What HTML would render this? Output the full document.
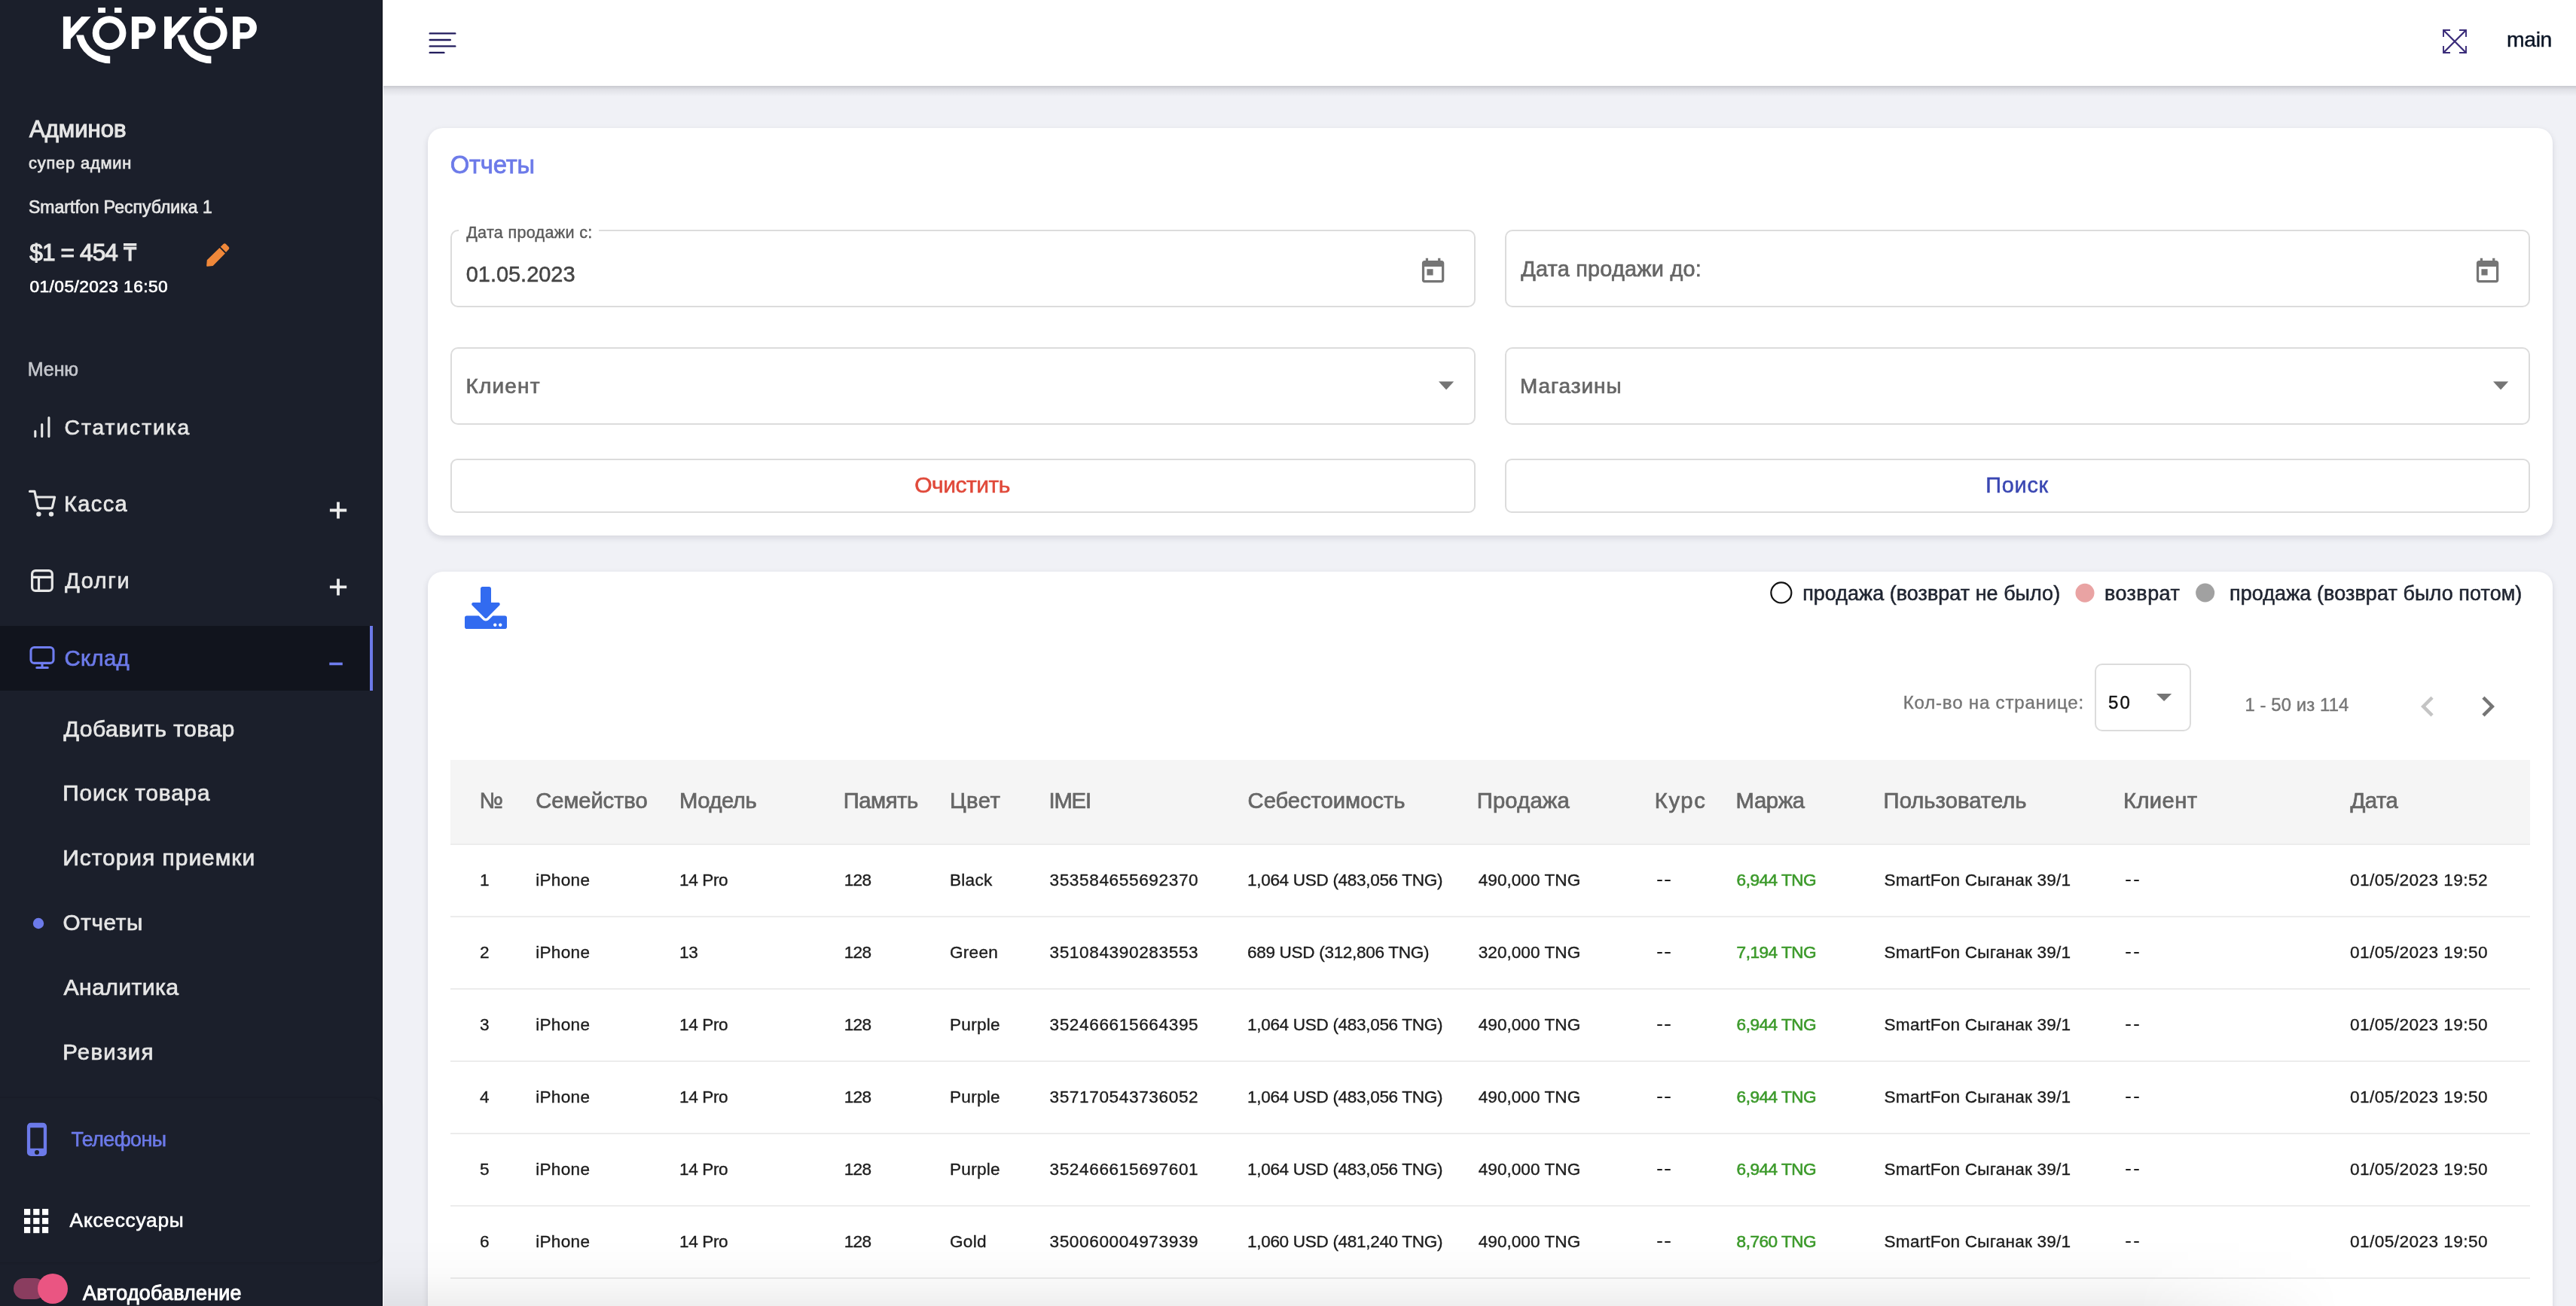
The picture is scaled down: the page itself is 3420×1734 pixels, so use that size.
<!DOCTYPE html>
<html><head><meta charset="utf-8"><title>Отчеты</title>
<style>
html,body{margin:0;padding:0}
body{width:3420px;height:1734px;overflow:hidden;position:relative;background:#f0f1f6;font-family:"Liberation Sans",sans-serif}
.t{position:absolute;line-height:1;white-space:nowrap}
.a{position:absolute}
svg{position:absolute;overflow:visible}
</style></head><body>

<div class="a" style="left:508px;top:0;width:2912px;height:114px;background:#fff"></div>
<div class="a" style="left:508px;top:114px;width:2912px;height:14px;background:linear-gradient(to bottom,rgba(40,40,50,0.2),rgba(40,40,50,0.08) 35%,rgba(40,40,50,0))"></div>
<div class="a" style="left:568px;top:170px;width:2821px;height:541px;background:#fff;border-radius:20px;box-shadow:0 3px 8px rgba(20,20,40,0.12)"></div>
<div class="a" style="left:568px;top:759px;width:2821px;height:1100px;background:#fff;border-radius:20px;box-shadow:0 3px 8px rgba(20,20,40,0.12)"></div>
<div class="a" style="left:597.7px;top:304.8px;width:1357.0px;height:99.6px;border:2px solid #dcdcdc;border-radius:10px"></div>
<div class="a" style="left:1997.7px;top:304.8px;width:1357.0px;height:99.6px;border:2px solid #dcdcdc;border-radius:10px"></div>
<div class="a" style="left:597.7px;top:460.6px;width:1357.0px;height:99.2px;border:2px solid #dcdcdc;border-radius:10px"></div>
<div class="a" style="left:1997.7px;top:460.6px;width:1357.0px;height:99.2px;border:2px solid #dcdcdc;border-radius:10px"></div>
<div class="a" style="left:597.7px;top:608.7px;width:1357.0px;height:68.3px;border:2px solid #dcdcdc;border-radius:9px"></div>
<div class="a" style="left:1997.7px;top:608.7px;width:1357.0px;height:68.3px;border:2px solid #dcdcdc;border-radius:9px"></div>
<div class="a" style="left:609px;top:300px;width:186px;height:12px;background:#fff"></div>
<div class="a" style="left:2780.6px;top:881.4px;width:124.1px;height:85.6px;border:2px solid #dcdcdc;border-radius:10px"></div>
<div class="a" style="left:598px;top:1009px;width:2761px;height:112px;background:#f5f5f5"></div>
<div class="a" style="left:598px;top:1120px;width:2761px;height:2px;background:#ececec"></div>
<div class="a" style="left:598px;top:1216px;width:2761px;height:2px;background:#ececec"></div>
<div class="a" style="left:598px;top:1312px;width:2761px;height:2px;background:#ececec"></div>
<div class="a" style="left:598px;top:1408px;width:2761px;height:2px;background:#ececec"></div>
<div class="a" style="left:598px;top:1504px;width:2761px;height:2px;background:#ececec"></div>
<div class="a" style="left:598px;top:1600px;width:2761px;height:2px;background:#ececec"></div>
<div class="a" style="left:598px;top:1696px;width:2761px;height:2px;background:#ececec"></div>
<div class="a" style="left:508px;top:1645px;width:2912px;height:89px;background:linear-gradient(to bottom,rgba(0,0,0,0),rgba(0,0,0,0.015) 50%,rgba(0,0,0,0.062));-webkit-mask-image:linear-gradient(to right,#000 2330px,rgba(0,0,0,0) 2600px);mask-image:linear-gradient(to right,#000 2330px,rgba(0,0,0,0) 2600px)"></div>
<svg style="left:1882.8px;top:340.6px" width="39.2" height="39.2" viewBox="0 0 24 24"><path fill="#757575" d="M19 3h-1V1h-2v2H8V1H6v2H5c-1.11 0-1.99.9-1.99 2L3 19c0 1.1.89 2 2 2h14c1.1 0 2-.9 2-2V5c0-1.1-.9-2-2-2zm0 16H5V8h14v11zM7 10h5v5H7z"/></svg>
<svg style="left:3283.0px;top:340.6px" width="39.2" height="39.2" viewBox="0 0 24 24"><path fill="#757575" d="M19 3h-1V1h-2v2H8V1H6v2H5c-1.11 0-1.99.9-1.99 2L3 19c0 1.1.89 2 2 2h14c1.1 0 2-.9 2-2V5c0-1.1-.9-2-2-2zm0 16H5V8h14v11zM7 10h5v5H7z"/></svg>
<svg style="left:0;top:0" width="1" height="1"><path fill="#757575" d="M1910 506.6h20.2l-10.1 10.9z"/></svg>
<svg style="left:0;top:0" width="1" height="1"><path fill="#757575" d="M3310 506.6h20.2l-10.1 10.9z"/></svg>
<svg style="left:0;top:0" width="1" height="1"><path fill="#757575" d="M2863 920.9h20.2l-10.1 10z"/></svg>
<svg style="left:3196px;top:910.8px" width="54" height="54" viewBox="0 0 24 24"><path fill="#c4c4c4" d="M15.41 7.41L14 6l-6 6 6 6 1.41-1.41L10.83 12z"/></svg>
<svg style="left:3276.1px;top:910.8px" width="54" height="54" viewBox="0 0 24 24"><path fill="#757575" d="M10 6L8.59 7.41 13.17 12l-4.58 4.59L10 18l6-6z"/></svg>
<svg style="left:617.4px;top:779px" width="56" height="56" viewBox="0 0 512 512"><path fill="#326bf0" d="M216 0h80c13.3 0 24 10.7 24 24v168h87.7c17.8 0 26.7 21.5 14.1 34.1L269.7 378.3c-7.5 7.5-19.8 7.5-27.3 0L90.1 226.1c-12.6-12.6-3.7-34.1 14.1-34.1H192V24c0-13.3 10.7-24 24-24zm296 376v112c0 13.3-10.7 24-24 24H24c-13.3 0-24-10.7-24-24V376c0-13.3 10.7-24 24-24h146.7l49 49c20.1 20.1 52.5 20.1 72.6 0l49-49H488c13.3 0 24 10.7 24 24zm-124 88c0-11-9-20-20-20s-20 9-20 20 9 20 20 20 20-9 20-20zm64 0c0-11-9-20-20-20s-20 9-20 20 9 20 20 20 20-9 20-20z"/></svg>
<svg style="left:0;top:0" width="1" height="1"><circle cx="2364.85" cy="786.95" r="13.5" fill="none" stroke="#111" stroke-width="2.2"/><circle cx="2768" cy="787.25" r="12.5" fill="#e9a3a3"/><circle cx="2927.65" cy="787" r="12.5" fill="#a1a1a1"/></svg>
<svg style="left:0;top:0" width="1" height="1"><g stroke="#211b5c" stroke-width="2.4" stroke-linecap="round"><path d="M570.7 44.4H604.3M570.7 53H597.8M570.7 61.4H604.3M570.7 69.9H589.4"/></g></svg>
<svg style="left:0;top:0" width="1" height="1"><g fill="none" stroke="#3b2d7a" stroke-width="2"><path d="M3244 49V40H3253M3265 40H3274V49M3274 61V70H3265M3253 70H3244V61" stroke-width="1.9"/><path d="M3244.5 40.5L3273.5 69.5M3273.5 40.5L3244.5 69.5" stroke-width="2.3"/></g></svg>
<div class="a" style="left:0;top:0;width:507px;height:1734px;background:#1b1f2b"></div>
<div class="a" style="left:507px;top:0;width:1px;height:1734px;background:#0c1019"></div>
<div class="a" style="left:508px;top:114px;width:1px;height:1620px;background:#f8f9fc"></div>
<div class="a" style="left:0;top:831px;width:491px;height:86px;background:#11141d"></div>
<div class="a" style="left:491px;top:831px;width:4px;height:86px;background:#6c7ae9"></div>
<div class="a" style="left:-10px;top:1458px;width:517px;height:218px;background:#1b1f2b;border-radius:0 12px 12px 0;box-shadow:0 0 3px rgba(0,0,0,0.25)"></div>
<svg style="left:0;top:0" width="1" height="1"><g fill="#fff"><g transform="translate(0 0)"><rect x="83.9" y="21.9" width="9.9" height="43"/><path d="M92.8 38.9L108.3 21.9H120.6L92.8 52.9Z"/><path d="M101.1 46.6A45.8 45.8 0 0 0 146.2 84.2V74.5A36.1 36.1 0 0 1 111.04 46.6Z"/><circle cx="145.1" cy="43.7" r="17.9" fill="none" stroke="#fff" stroke-width="8.9"/><rect x="130.2" y="10.2" width="9.8" height="6.7"/><rect x="152" y="10.2" width="9.5" height="6.7"/><path fill-rule="evenodd" d="M174.9 21.9H191.85A14.85 14.85 0 0 1 191.85 51.6H184.4V64.9H174.9ZM184.4 30.9V42.9H191.4A6 6 0 0 0 191.4 30.9Z"/></g><g transform="translate(134.2 0)"><rect x="83.9" y="21.9" width="9.9" height="43"/><path d="M92.8 38.9L108.3 21.9H120.6L92.8 52.9Z"/><path d="M101.1 46.6A45.8 45.8 0 0 0 146.2 84.2V74.5A36.1 36.1 0 0 1 111.04 46.6Z"/><circle cx="145.1" cy="43.7" r="17.9" fill="none" stroke="#fff" stroke-width="8.9"/><rect x="130.2" y="10.2" width="9.8" height="6.7"/><rect x="152" y="10.2" width="9.5" height="6.7"/><path fill-rule="evenodd" d="M174.9 21.9H191.85A14.85 14.85 0 0 1 191.85 51.6H184.4V64.9H174.9ZM184.4 30.9V42.9H191.4A6 6 0 0 0 191.4 30.9Z"/></g></g></svg>
<svg style="left:0;top:0" width="1" height="1"><g fill="#f0883a"><path d="M274.8 345.3L291.5 329L298.9 336.4L282.7 352.9L275.5 353.8Q274 354 274.2 352.5Z"/><path d="M292.8 327.8L296.6 324Q298.2 322.4 299.9 324L303.6 327.7Q305.2 329.3 303.7 330.9L300 334.9Z"/></g></svg>
<svg style="left:0;top:0" width="1" height="1"><g stroke="#e6e6e6" stroke-width="3.1" stroke-linecap="round"><path d="M46.8 572.5V579.4M55.7 563.5V579.4M64.9 554.5V579.4"/></g></svg>
<svg style="left:0;top:0" width="1" height="1"><g fill="none" stroke="#e6e6e6" stroke-width="3.2" stroke-linecap="round" stroke-linejoin="round"><path d="M39.5 652.4H45.9L50.2 672.5Q50.8 674.9 53.3 674.9H67.3Q69.2 674.9 69.6 673L72.6 660H47.5"/></g><g fill="#e6e6e6"><circle cx="51.4" cy="682.6" r="3.2"/><circle cx="68" cy="682.6" r="3.2"/></g></svg>
<svg style="left:0;top:0" width="1" height="1"><g fill="none" stroke="#e6e6e6" stroke-width="3.2"><rect x="42.6" y="757.6" width="26.7" height="26.8" rx="4.5"/><path d="M42.6 766.4H69.3M51.5 766.4V784.4"/></g></svg>
<svg style="left:0;top:0" width="1" height="1"><g fill="none" stroke="#6f7df0" stroke-width="3.1" stroke-linecap="round"><rect x="41" y="859.5" width="30" height="20.9" rx="4.5"/><path d="M56 881.9V886.5M48.8 886.5H63.3"/></g></svg>
<svg style="left:0;top:0" width="1" height="1"><g stroke="#ececec" stroke-width="3.8"><path d="M437.9 677.5H460.2M449 666.5V688.5M437.9 779.4H460.2M449 768.4V790.4"/><path d="M437.3 881.4H454.8" stroke="#6f7df0" stroke-width="3.6"/></g></svg>
<svg style="left:0;top:0" width="1" height="1"><circle cx="51" cy="1226" r="7.2" fill="#6c7ae9"/></svg>
<svg style="left:0;top:0" width="1" height="1"><path fill-rule="evenodd" fill="#6c7ae9" d="M41 1490.8H57A5.1 5.1 0 0 1 62.1 1495.9V1529.9A5.1 5.1 0 0 1 57 1535H41A5.1 5.1 0 0 1 35.9 1529.9V1495.9A5.1 5.1 0 0 1 41 1490.8ZM40.2 1497.2V1524.8H57.8V1497.2ZM49 1526.9A3 3 0 1 0 49 1532.9A3 3 0 1 0 49 1526.9Z"/></svg>
<svg style="left:0;top:0" width="1" height="1"><g fill="#fff"><rect x="32" y="1605" width="8.2" height="8.2"/><rect x="44.2" y="1605" width="8.2" height="8.2"/><rect x="56" y="1605" width="8.2" height="8.2"/><rect x="32" y="1617" width="8.2" height="8.2"/><rect x="44.2" y="1617" width="8.2" height="8.2"/><rect x="56" y="1617" width="8.2" height="8.2"/><rect x="32" y="1629" width="8.2" height="8.2"/><rect x="44.2" y="1629" width="8.2" height="8.2"/><rect x="56" y="1629" width="8.2" height="8.2"/></g></svg>
<div class="a" style="left:18px;top:1697px;width:42px;height:28px;border-radius:14px;background:#8a3d5f"></div>
<div class="a" style="left:50px;top:1691px;width:40px;height:40px;border-radius:20px;background:#ea5582"></div>
<div class="a" style="left:0;top:0;width:3420px;height:1734px;will-change:transform">
<div class="t" style="left:39.00px;top:156.00px;font-size:31.16px;font-weight:400;letter-spacing:-0.07px;color:#e6e6e6;-webkit-text-stroke:1.1px #e6e6e6;">Админов</div>
<div class="t" style="left:38.00px;top:206.00px;font-size:21.89px;font-weight:400;letter-spacing:0.80px;color:#e6e6e6;-webkit-text-stroke:0.7px #e6e6e6;">супер админ</div>
<div class="t" style="left:38.00px;top:264.00px;font-size:23.04px;font-weight:400;letter-spacing:0.00px;color:#e6e6e6;-webkit-text-stroke:0.7px #e6e6e6;">Smartfon Республика 1</div>
<div class="t" style="left:39.20px;top:320.00px;font-size:31.59px;font-weight:400;letter-spacing:-0.87px;color:#e6e6e6;-webkit-text-stroke:1.1px #e6e6e6;">$1 = 454 ₸</div>
<div class="t" style="left:39.50px;top:369.00px;font-size:22.75px;font-weight:400;letter-spacing:0.40px;color:#ffffff;-webkit-text-stroke:0.7px #ffffff;">01/05/2023 16:50</div>
<div class="t" style="left:36.80px;top:478.00px;font-size:25.07px;font-weight:400;letter-spacing:-0.13px;color:#c4c6cc;-webkit-text-stroke:0.6px #c4c6cc;">Меню</div>
<div class="t" style="left:85.60px;top:553.00px;font-size:28.26px;font-weight:400;letter-spacing:1.93px;color:#e6e6e6;-webkit-text-stroke:0.7px #e6e6e6;">Статистика</div>
<div class="t" style="left:85.00px;top:655.00px;font-size:28.99px;font-weight:400;letter-spacing:1.40px;color:#e6e6e6;-webkit-text-stroke:0.7px #e6e6e6;">Касса</div>
<div class="t" style="left:86.20px;top:757.00px;font-size:28.84px;font-weight:400;letter-spacing:1.70px;color:#e6e6e6;-webkit-text-stroke:0.7px #e6e6e6;">Долги</div>
<div class="t" style="left:85.60px;top:859.00px;font-size:29.42px;font-weight:400;letter-spacing:0.25px;color:#6c7ae9;-webkit-text-stroke:0.7px #6c7ae9;">Склад</div>
<div class="t" style="left:84.60px;top:953.00px;font-size:30.29px;font-weight:400;letter-spacing:0.37px;color:#e6e6e6;-webkit-text-stroke:0.7px #e6e6e6;">Добавить товар</div>
<div class="t" style="left:83.20px;top:1038.00px;font-size:29.71px;font-weight:400;letter-spacing:0.91px;color:#e6e6e6;-webkit-text-stroke:0.7px #e6e6e6;">Поиск товара</div>
<div class="t" style="left:83.20px;top:1124.00px;font-size:30.00px;font-weight:400;letter-spacing:0.96px;color:#e6e6e6;-webkit-text-stroke:0.7px #e6e6e6;">История приемки</div>
<div class="t" style="left:83.60px;top:1210.00px;font-size:29.71px;font-weight:400;letter-spacing:0.60px;color:#e6e6e6;-webkit-text-stroke:0.7px #e6e6e6;">Отчеты</div>
<div class="t" style="left:84.60px;top:1296.00px;font-size:30.29px;font-weight:400;letter-spacing:0.33px;color:#e6e6e6;-webkit-text-stroke:0.7px #e6e6e6;">Аналитика</div>
<div class="t" style="left:83.20px;top:1382.00px;font-size:29.42px;font-weight:400;letter-spacing:1.27px;color:#e6e6e6;-webkit-text-stroke:0.7px #e6e6e6;">Ревизия</div>
<div class="t" style="left:94.50px;top:1500.00px;font-size:26.81px;font-weight:400;letter-spacing:-0.57px;color:#6c7ae9;-webkit-text-stroke:0.6px #6c7ae9;">Телефоны</div>
<div class="t" style="left:92.60px;top:1607.00px;font-size:26.38px;font-weight:400;letter-spacing:0.71px;color:#ffffff;-webkit-text-stroke:0.6px #ffffff;">Аксессуары</div>
<div class="t" style="left:110.00px;top:1704.00px;font-size:26.81px;font-weight:400;letter-spacing:0.28px;color:#ffffff;-webkit-text-stroke:1.0px #ffffff;">Автодобавление</div>
<div class="t" style="left:3328.00px;top:38.00px;font-size:28.30px;font-weight:400;letter-spacing:-0.33px;color:#0b1526;-webkit-text-stroke:0.45px #0b1526;">main</div>
<div class="t" style="left:597.80px;top:203.00px;font-size:32.75px;font-weight:400;letter-spacing:-0.20px;color:#6c7ae9;-webkit-text-stroke:0.8px #6c7ae9;">Отчеты</div>
<div class="t" style="left:619.20px;top:298.00px;font-size:21.59px;font-weight:400;letter-spacing:0.30px;color:#5a5a5a;-webkit-text-stroke:0.4px #5a5a5a;">Дата продажи с:</div>
<div class="t" style="left:618.70px;top:350.00px;font-size:28.99px;font-weight:400;letter-spacing:-0.02px;color:#454545;-webkit-text-stroke:0.5px #454545;">01.05.2023</div>
<div class="t" style="left:2019.20px;top:343.00px;font-size:28.84px;font-weight:400;letter-spacing:0.24px;color:#666666;-webkit-text-stroke:0.7px #666666;">Дата продажи до:</div>
<div class="t" style="left:618.40px;top:499.00px;font-size:27.97px;font-weight:400;letter-spacing:1.20px;color:#666666;-webkit-text-stroke:0.7px #666666;">Клиент</div>
<div class="t" style="left:2018.00px;top:499.00px;font-size:27.97px;font-weight:400;letter-spacing:0.94px;color:#666666;-webkit-text-stroke:0.7px #666666;">Магазины</div>
<div class="t" style="left:1214.30px;top:629.00px;font-size:30.00px;font-weight:400;letter-spacing:-0.51px;color:#e0493a;-webkit-text-stroke:0.6px #e0493a;">Очистить</div>
<div class="t" style="left:2636.30px;top:630.00px;font-size:28.84px;font-weight:400;letter-spacing:0.75px;color:#3a47b2;-webkit-text-stroke:0.5px #3a47b2;">Поиск</div>
<div class="t" style="left:2393.20px;top:775.00px;font-size:26.96px;font-weight:400;letter-spacing:0.04px;color:#1f2430;-webkit-text-stroke:0.55px #1f2430;">продажа (возврат не было)</div>
<div class="t" style="left:2793.90px;top:775.00px;font-size:26.96px;font-weight:400;letter-spacing:0.47px;color:#1f2430;-webkit-text-stroke:0.55px #1f2430;">возврат</div>
<div class="t" style="left:2960.00px;top:775.00px;font-size:26.96px;font-weight:400;letter-spacing:0.10px;color:#1f2430;-webkit-text-stroke:0.55px #1f2430;">продажа (возврат было потом)</div>
<div class="t" style="left:2526.70px;top:921.00px;font-size:24.06px;font-weight:400;letter-spacing:0.81px;color:#757575;-webkit-text-stroke:0.4px #757575;">Кол-во на странице:</div>
<div class="t" style="left:2799.00px;top:921.00px;font-size:24.06px;font-weight:400;letter-spacing:2.20px;color:#111111;-webkit-text-stroke:0.4px #111111;">50</div>
<div class="t" style="left:2980.40px;top:924.00px;font-size:23.84px;font-weight:400;letter-spacing:0.13px;color:#757575;-webkit-text-stroke:0.4px #757575;">1 - 50 из 114</div>
<div class="t" style="left:636.50px;top:1048.00px;font-size:29.28px;font-weight:400;letter-spacing:0.00px;color:#666666;-webkit-text-stroke:0.7px #666666;">№</div>
<div class="t" style="left:711.20px;top:1048.00px;font-size:29.28px;font-weight:400;letter-spacing:-0.15px;color:#666666;-webkit-text-stroke:0.7px #666666;">Семейство</div>
<div class="t" style="left:902.00px;top:1048.00px;font-size:29.28px;font-weight:400;letter-spacing:-0.48px;color:#666666;-webkit-text-stroke:0.7px #666666;">Модель</div>
<div class="t" style="left:1119.70px;top:1048.00px;font-size:29.28px;font-weight:400;letter-spacing:-0.48px;color:#666666;-webkit-text-stroke:0.7px #666666;">Память</div>
<div class="t" style="left:1261.00px;top:1048.00px;font-size:29.28px;font-weight:400;letter-spacing:0.47px;color:#666666;-webkit-text-stroke:0.7px #666666;">Цвет</div>
<div class="t" style="left:1392.50px;top:1048.00px;font-size:29.28px;font-weight:400;letter-spacing:-1.20px;color:#666666;-webkit-text-stroke:0.7px #666666;">IMEI</div>
<div class="t" style="left:1656.60px;top:1048.00px;font-size:29.28px;font-weight:400;letter-spacing:-0.08px;color:#666666;-webkit-text-stroke:0.7px #666666;">Себестоимость</div>
<div class="t" style="left:1960.70px;top:1048.00px;font-size:29.28px;font-weight:400;letter-spacing:0.17px;color:#666666;-webkit-text-stroke:0.7px #666666;">Продажа</div>
<div class="t" style="left:2196.80px;top:1048.00px;font-size:29.28px;font-weight:400;letter-spacing:1.60px;color:#666666;-webkit-text-stroke:0.7px #666666;">Курс</div>
<div class="t" style="left:2304.60px;top:1048.00px;font-size:29.28px;font-weight:400;letter-spacing:-0.40px;color:#666666;-webkit-text-stroke:0.7px #666666;">Маржа</div>
<div class="t" style="left:2500.60px;top:1048.00px;font-size:29.28px;font-weight:400;letter-spacing:0.00px;color:#666666;-webkit-text-stroke:0.7px #666666;">Пользователь</div>
<div class="t" style="left:2819.00px;top:1048.00px;font-size:29.28px;font-weight:400;letter-spacing:0.36px;color:#666666;-webkit-text-stroke:0.7px #666666;">Клиент</div>
<div class="t" style="left:3120.40px;top:1048.00px;font-size:29.28px;font-weight:400;letter-spacing:-0.47px;color:#666666;-webkit-text-stroke:0.7px #666666;">Дата</div>
<div class="t" style="left:636.90px;top:1158.00px;font-size:22.61px;font-weight:400;letter-spacing:0.30px;color:#1c1c1c;-webkit-text-stroke:0.35px #1c1c1c;">1</div>
<div class="t" style="left:711.20px;top:1158.00px;font-size:22.61px;font-weight:400;letter-spacing:0.28px;color:#1c1c1c;-webkit-text-stroke:0.35px #1c1c1c;">iPhone</div>
<div class="t" style="left:902.00px;top:1158.00px;font-size:22.61px;font-weight:400;letter-spacing:-0.40px;color:#1c1c1c;-webkit-text-stroke:0.35px #1c1c1c;">14 Pro</div>
<div class="t" style="left:1120.70px;top:1158.00px;font-size:22.61px;font-weight:400;letter-spacing:-0.70px;color:#1c1c1c;-webkit-text-stroke:0.35px #1c1c1c;">128</div>
<div class="t" style="left:1261.00px;top:1158.00px;font-size:22.61px;font-weight:400;letter-spacing:0.25px;color:#1c1c1c;-webkit-text-stroke:0.35px #1c1c1c;">Black</div>
<div class="t" style="left:1393.50px;top:1158.00px;font-size:22.61px;font-weight:400;letter-spacing:0.61px;color:#1c1c1c;-webkit-text-stroke:0.35px #1c1c1c;">353584655692370</div>
<div class="t" style="left:1656.00px;top:1158.00px;font-size:22.61px;font-weight:400;letter-spacing:-0.35px;color:#1c1c1c;-webkit-text-stroke:0.35px #1c1c1c;">1,064 USD (483,056 TNG)</div>
<div class="t" style="left:1962.70px;top:1158.00px;font-size:22.61px;font-weight:400;letter-spacing:0.02px;color:#1c1c1c;-webkit-text-stroke:0.35px #1c1c1c;">490,000 TNG</div>
<div class="a" style="left:2199.5px;top:1168.2px;width:7.5px;height:1.9px;background:#1c1c1c;border-radius:1px"></div>
<div class="a" style="left:2210.3px;top:1168.2px;width:7.5px;height:1.9px;background:#1c1c1c;border-radius:1px"></div>
<div class="t" style="left:2305.60px;top:1158.00px;font-size:22.61px;font-weight:400;letter-spacing:-0.52px;color:#3c9a2b;-webkit-text-stroke:0.6px #3c9a2b;">6,944 TNG</div>
<div class="t" style="left:2501.60px;top:1158.00px;font-size:22.61px;font-weight:400;letter-spacing:0.19px;color:#1c1c1c;-webkit-text-stroke:0.35px #1c1c1c;">SmartFon Сыганак 39/1</div>
<div class="a" style="left:2821.7px;top:1168.2px;width:7.5px;height:1.9px;background:#1c1c1c;border-radius:1px"></div>
<div class="a" style="left:2832.5px;top:1168.2px;width:7.5px;height:1.9px;background:#1c1c1c;border-radius:1px"></div>
<div class="t" style="left:3119.90px;top:1158.00px;font-size:22.61px;font-weight:400;letter-spacing:0.44px;color:#1c1c1c;-webkit-text-stroke:0.35px #1c1c1c;">01/05/2023 19:52</div>
<div class="t" style="left:636.90px;top:1254.00px;font-size:22.61px;font-weight:400;letter-spacing:0.30px;color:#1c1c1c;-webkit-text-stroke:0.35px #1c1c1c;">2</div>
<div class="t" style="left:711.20px;top:1254.00px;font-size:22.61px;font-weight:400;letter-spacing:0.28px;color:#1c1c1c;-webkit-text-stroke:0.35px #1c1c1c;">iPhone</div>
<div class="t" style="left:902.00px;top:1254.00px;font-size:22.61px;font-weight:400;letter-spacing:-0.40px;color:#1c1c1c;-webkit-text-stroke:0.35px #1c1c1c;">13</div>
<div class="t" style="left:1120.70px;top:1254.00px;font-size:22.61px;font-weight:400;letter-spacing:-0.70px;color:#1c1c1c;-webkit-text-stroke:0.35px #1c1c1c;">128</div>
<div class="t" style="left:1261.00px;top:1254.00px;font-size:22.61px;font-weight:400;letter-spacing:0.25px;color:#1c1c1c;-webkit-text-stroke:0.35px #1c1c1c;">Green</div>
<div class="t" style="left:1393.50px;top:1254.00px;font-size:22.61px;font-weight:400;letter-spacing:0.61px;color:#1c1c1c;-webkit-text-stroke:0.35px #1c1c1c;">351084390283553</div>
<div class="t" style="left:1656.00px;top:1254.00px;font-size:22.61px;font-weight:400;letter-spacing:-0.35px;color:#1c1c1c;-webkit-text-stroke:0.35px #1c1c1c;">689 USD (312,806 TNG)</div>
<div class="t" style="left:1962.70px;top:1254.00px;font-size:22.61px;font-weight:400;letter-spacing:0.02px;color:#1c1c1c;-webkit-text-stroke:0.35px #1c1c1c;">320,000 TNG</div>
<div class="a" style="left:2199.5px;top:1264.2px;width:7.5px;height:1.9px;background:#1c1c1c;border-radius:1px"></div>
<div class="a" style="left:2210.3px;top:1264.2px;width:7.5px;height:1.9px;background:#1c1c1c;border-radius:1px"></div>
<div class="t" style="left:2305.60px;top:1254.00px;font-size:22.61px;font-weight:400;letter-spacing:-0.52px;color:#3c9a2b;-webkit-text-stroke:0.6px #3c9a2b;">7,194 TNG</div>
<div class="t" style="left:2501.60px;top:1254.00px;font-size:22.61px;font-weight:400;letter-spacing:0.19px;color:#1c1c1c;-webkit-text-stroke:0.35px #1c1c1c;">SmartFon Сыганак 39/1</div>
<div class="a" style="left:2821.7px;top:1264.2px;width:7.5px;height:1.9px;background:#1c1c1c;border-radius:1px"></div>
<div class="a" style="left:2832.5px;top:1264.2px;width:7.5px;height:1.9px;background:#1c1c1c;border-radius:1px"></div>
<div class="t" style="left:3119.90px;top:1254.00px;font-size:22.61px;font-weight:400;letter-spacing:0.44px;color:#1c1c1c;-webkit-text-stroke:0.35px #1c1c1c;">01/05/2023 19:50</div>
<div class="t" style="left:636.90px;top:1350.00px;font-size:22.61px;font-weight:400;letter-spacing:0.30px;color:#1c1c1c;-webkit-text-stroke:0.35px #1c1c1c;">3</div>
<div class="t" style="left:711.20px;top:1350.00px;font-size:22.61px;font-weight:400;letter-spacing:0.28px;color:#1c1c1c;-webkit-text-stroke:0.35px #1c1c1c;">iPhone</div>
<div class="t" style="left:902.00px;top:1350.00px;font-size:22.61px;font-weight:400;letter-spacing:-0.40px;color:#1c1c1c;-webkit-text-stroke:0.35px #1c1c1c;">14 Pro</div>
<div class="t" style="left:1120.70px;top:1350.00px;font-size:22.61px;font-weight:400;letter-spacing:-0.70px;color:#1c1c1c;-webkit-text-stroke:0.35px #1c1c1c;">128</div>
<div class="t" style="left:1261.00px;top:1350.00px;font-size:22.61px;font-weight:400;letter-spacing:0.25px;color:#1c1c1c;-webkit-text-stroke:0.35px #1c1c1c;">Purple</div>
<div class="t" style="left:1393.50px;top:1350.00px;font-size:22.61px;font-weight:400;letter-spacing:0.61px;color:#1c1c1c;-webkit-text-stroke:0.35px #1c1c1c;">352466615664395</div>
<div class="t" style="left:1656.00px;top:1350.00px;font-size:22.61px;font-weight:400;letter-spacing:-0.35px;color:#1c1c1c;-webkit-text-stroke:0.35px #1c1c1c;">1,064 USD (483,056 TNG)</div>
<div class="t" style="left:1962.70px;top:1350.00px;font-size:22.61px;font-weight:400;letter-spacing:0.02px;color:#1c1c1c;-webkit-text-stroke:0.35px #1c1c1c;">490,000 TNG</div>
<div class="a" style="left:2199.5px;top:1360.2px;width:7.5px;height:1.9px;background:#1c1c1c;border-radius:1px"></div>
<div class="a" style="left:2210.3px;top:1360.2px;width:7.5px;height:1.9px;background:#1c1c1c;border-radius:1px"></div>
<div class="t" style="left:2305.60px;top:1350.00px;font-size:22.61px;font-weight:400;letter-spacing:-0.52px;color:#3c9a2b;-webkit-text-stroke:0.6px #3c9a2b;">6,944 TNG</div>
<div class="t" style="left:2501.60px;top:1350.00px;font-size:22.61px;font-weight:400;letter-spacing:0.19px;color:#1c1c1c;-webkit-text-stroke:0.35px #1c1c1c;">SmartFon Сыганак 39/1</div>
<div class="a" style="left:2821.7px;top:1360.2px;width:7.5px;height:1.9px;background:#1c1c1c;border-radius:1px"></div>
<div class="a" style="left:2832.5px;top:1360.2px;width:7.5px;height:1.9px;background:#1c1c1c;border-radius:1px"></div>
<div class="t" style="left:3119.90px;top:1350.00px;font-size:22.61px;font-weight:400;letter-spacing:0.44px;color:#1c1c1c;-webkit-text-stroke:0.35px #1c1c1c;">01/05/2023 19:50</div>
<div class="t" style="left:636.90px;top:1446.00px;font-size:22.61px;font-weight:400;letter-spacing:0.30px;color:#1c1c1c;-webkit-text-stroke:0.35px #1c1c1c;">4</div>
<div class="t" style="left:711.20px;top:1446.00px;font-size:22.61px;font-weight:400;letter-spacing:0.28px;color:#1c1c1c;-webkit-text-stroke:0.35px #1c1c1c;">iPhone</div>
<div class="t" style="left:902.00px;top:1446.00px;font-size:22.61px;font-weight:400;letter-spacing:-0.40px;color:#1c1c1c;-webkit-text-stroke:0.35px #1c1c1c;">14 Pro</div>
<div class="t" style="left:1120.70px;top:1446.00px;font-size:22.61px;font-weight:400;letter-spacing:-0.70px;color:#1c1c1c;-webkit-text-stroke:0.35px #1c1c1c;">128</div>
<div class="t" style="left:1261.00px;top:1446.00px;font-size:22.61px;font-weight:400;letter-spacing:0.25px;color:#1c1c1c;-webkit-text-stroke:0.35px #1c1c1c;">Purple</div>
<div class="t" style="left:1393.50px;top:1446.00px;font-size:22.61px;font-weight:400;letter-spacing:0.61px;color:#1c1c1c;-webkit-text-stroke:0.35px #1c1c1c;">357170543736052</div>
<div class="t" style="left:1656.00px;top:1446.00px;font-size:22.61px;font-weight:400;letter-spacing:-0.35px;color:#1c1c1c;-webkit-text-stroke:0.35px #1c1c1c;">1,064 USD (483,056 TNG)</div>
<div class="t" style="left:1962.70px;top:1446.00px;font-size:22.61px;font-weight:400;letter-spacing:0.02px;color:#1c1c1c;-webkit-text-stroke:0.35px #1c1c1c;">490,000 TNG</div>
<div class="a" style="left:2199.5px;top:1456.2px;width:7.5px;height:1.9px;background:#1c1c1c;border-radius:1px"></div>
<div class="a" style="left:2210.3px;top:1456.2px;width:7.5px;height:1.9px;background:#1c1c1c;border-radius:1px"></div>
<div class="t" style="left:2305.60px;top:1446.00px;font-size:22.61px;font-weight:400;letter-spacing:-0.52px;color:#3c9a2b;-webkit-text-stroke:0.6px #3c9a2b;">6,944 TNG</div>
<div class="t" style="left:2501.60px;top:1446.00px;font-size:22.61px;font-weight:400;letter-spacing:0.19px;color:#1c1c1c;-webkit-text-stroke:0.35px #1c1c1c;">SmartFon Сыганак 39/1</div>
<div class="a" style="left:2821.7px;top:1456.2px;width:7.5px;height:1.9px;background:#1c1c1c;border-radius:1px"></div>
<div class="a" style="left:2832.5px;top:1456.2px;width:7.5px;height:1.9px;background:#1c1c1c;border-radius:1px"></div>
<div class="t" style="left:3119.90px;top:1446.00px;font-size:22.61px;font-weight:400;letter-spacing:0.44px;color:#1c1c1c;-webkit-text-stroke:0.35px #1c1c1c;">01/05/2023 19:50</div>
<div class="t" style="left:636.90px;top:1542.00px;font-size:22.61px;font-weight:400;letter-spacing:0.30px;color:#1c1c1c;-webkit-text-stroke:0.35px #1c1c1c;">5</div>
<div class="t" style="left:711.20px;top:1542.00px;font-size:22.61px;font-weight:400;letter-spacing:0.28px;color:#1c1c1c;-webkit-text-stroke:0.35px #1c1c1c;">iPhone</div>
<div class="t" style="left:902.00px;top:1542.00px;font-size:22.61px;font-weight:400;letter-spacing:-0.40px;color:#1c1c1c;-webkit-text-stroke:0.35px #1c1c1c;">14 Pro</div>
<div class="t" style="left:1120.70px;top:1542.00px;font-size:22.61px;font-weight:400;letter-spacing:-0.70px;color:#1c1c1c;-webkit-text-stroke:0.35px #1c1c1c;">128</div>
<div class="t" style="left:1261.00px;top:1542.00px;font-size:22.61px;font-weight:400;letter-spacing:0.25px;color:#1c1c1c;-webkit-text-stroke:0.35px #1c1c1c;">Purple</div>
<div class="t" style="left:1393.50px;top:1542.00px;font-size:22.61px;font-weight:400;letter-spacing:0.61px;color:#1c1c1c;-webkit-text-stroke:0.35px #1c1c1c;">352466615697601</div>
<div class="t" style="left:1656.00px;top:1542.00px;font-size:22.61px;font-weight:400;letter-spacing:-0.35px;color:#1c1c1c;-webkit-text-stroke:0.35px #1c1c1c;">1,064 USD (483,056 TNG)</div>
<div class="t" style="left:1962.70px;top:1542.00px;font-size:22.61px;font-weight:400;letter-spacing:0.02px;color:#1c1c1c;-webkit-text-stroke:0.35px #1c1c1c;">490,000 TNG</div>
<div class="a" style="left:2199.5px;top:1552.2px;width:7.5px;height:1.9px;background:#1c1c1c;border-radius:1px"></div>
<div class="a" style="left:2210.3px;top:1552.2px;width:7.5px;height:1.9px;background:#1c1c1c;border-radius:1px"></div>
<div class="t" style="left:2305.60px;top:1542.00px;font-size:22.61px;font-weight:400;letter-spacing:-0.52px;color:#3c9a2b;-webkit-text-stroke:0.6px #3c9a2b;">6,944 TNG</div>
<div class="t" style="left:2501.60px;top:1542.00px;font-size:22.61px;font-weight:400;letter-spacing:0.19px;color:#1c1c1c;-webkit-text-stroke:0.35px #1c1c1c;">SmartFon Сыганак 39/1</div>
<div class="a" style="left:2821.7px;top:1552.2px;width:7.5px;height:1.9px;background:#1c1c1c;border-radius:1px"></div>
<div class="a" style="left:2832.5px;top:1552.2px;width:7.5px;height:1.9px;background:#1c1c1c;border-radius:1px"></div>
<div class="t" style="left:3119.90px;top:1542.00px;font-size:22.61px;font-weight:400;letter-spacing:0.44px;color:#1c1c1c;-webkit-text-stroke:0.35px #1c1c1c;">01/05/2023 19:50</div>
<div class="t" style="left:636.90px;top:1638.00px;font-size:22.61px;font-weight:400;letter-spacing:0.30px;color:#1c1c1c;-webkit-text-stroke:0.35px #1c1c1c;">6</div>
<div class="t" style="left:711.20px;top:1638.00px;font-size:22.61px;font-weight:400;letter-spacing:0.28px;color:#1c1c1c;-webkit-text-stroke:0.35px #1c1c1c;">iPhone</div>
<div class="t" style="left:902.00px;top:1638.00px;font-size:22.61px;font-weight:400;letter-spacing:-0.40px;color:#1c1c1c;-webkit-text-stroke:0.35px #1c1c1c;">14 Pro</div>
<div class="t" style="left:1120.70px;top:1638.00px;font-size:22.61px;font-weight:400;letter-spacing:-0.70px;color:#1c1c1c;-webkit-text-stroke:0.35px #1c1c1c;">128</div>
<div class="t" style="left:1261.00px;top:1638.00px;font-size:22.61px;font-weight:400;letter-spacing:0.25px;color:#1c1c1c;-webkit-text-stroke:0.35px #1c1c1c;">Gold</div>
<div class="t" style="left:1393.50px;top:1638.00px;font-size:22.61px;font-weight:400;letter-spacing:0.61px;color:#1c1c1c;-webkit-text-stroke:0.35px #1c1c1c;">350060004973939</div>
<div class="t" style="left:1656.00px;top:1638.00px;font-size:22.61px;font-weight:400;letter-spacing:-0.35px;color:#1c1c1c;-webkit-text-stroke:0.35px #1c1c1c;">1,060 USD (481,240 TNG)</div>
<div class="t" style="left:1962.70px;top:1638.00px;font-size:22.61px;font-weight:400;letter-spacing:0.02px;color:#1c1c1c;-webkit-text-stroke:0.35px #1c1c1c;">490,000 TNG</div>
<div class="a" style="left:2199.5px;top:1648.2px;width:7.5px;height:1.9px;background:#1c1c1c;border-radius:1px"></div>
<div class="a" style="left:2210.3px;top:1648.2px;width:7.5px;height:1.9px;background:#1c1c1c;border-radius:1px"></div>
<div class="t" style="left:2305.60px;top:1638.00px;font-size:22.61px;font-weight:400;letter-spacing:-0.52px;color:#3c9a2b;-webkit-text-stroke:0.6px #3c9a2b;">8,760 TNG</div>
<div class="t" style="left:2501.60px;top:1638.00px;font-size:22.61px;font-weight:400;letter-spacing:0.19px;color:#1c1c1c;-webkit-text-stroke:0.35px #1c1c1c;">SmartFon Сыганак 39/1</div>
<div class="a" style="left:2821.7px;top:1648.2px;width:7.5px;height:1.9px;background:#1c1c1c;border-radius:1px"></div>
<div class="a" style="left:2832.5px;top:1648.2px;width:7.5px;height:1.9px;background:#1c1c1c;border-radius:1px"></div>
<div class="t" style="left:3119.90px;top:1638.00px;font-size:22.61px;font-weight:400;letter-spacing:0.44px;color:#1c1c1c;-webkit-text-stroke:0.35px #1c1c1c;">01/05/2023 19:50</div>
</div>
</body></html>
